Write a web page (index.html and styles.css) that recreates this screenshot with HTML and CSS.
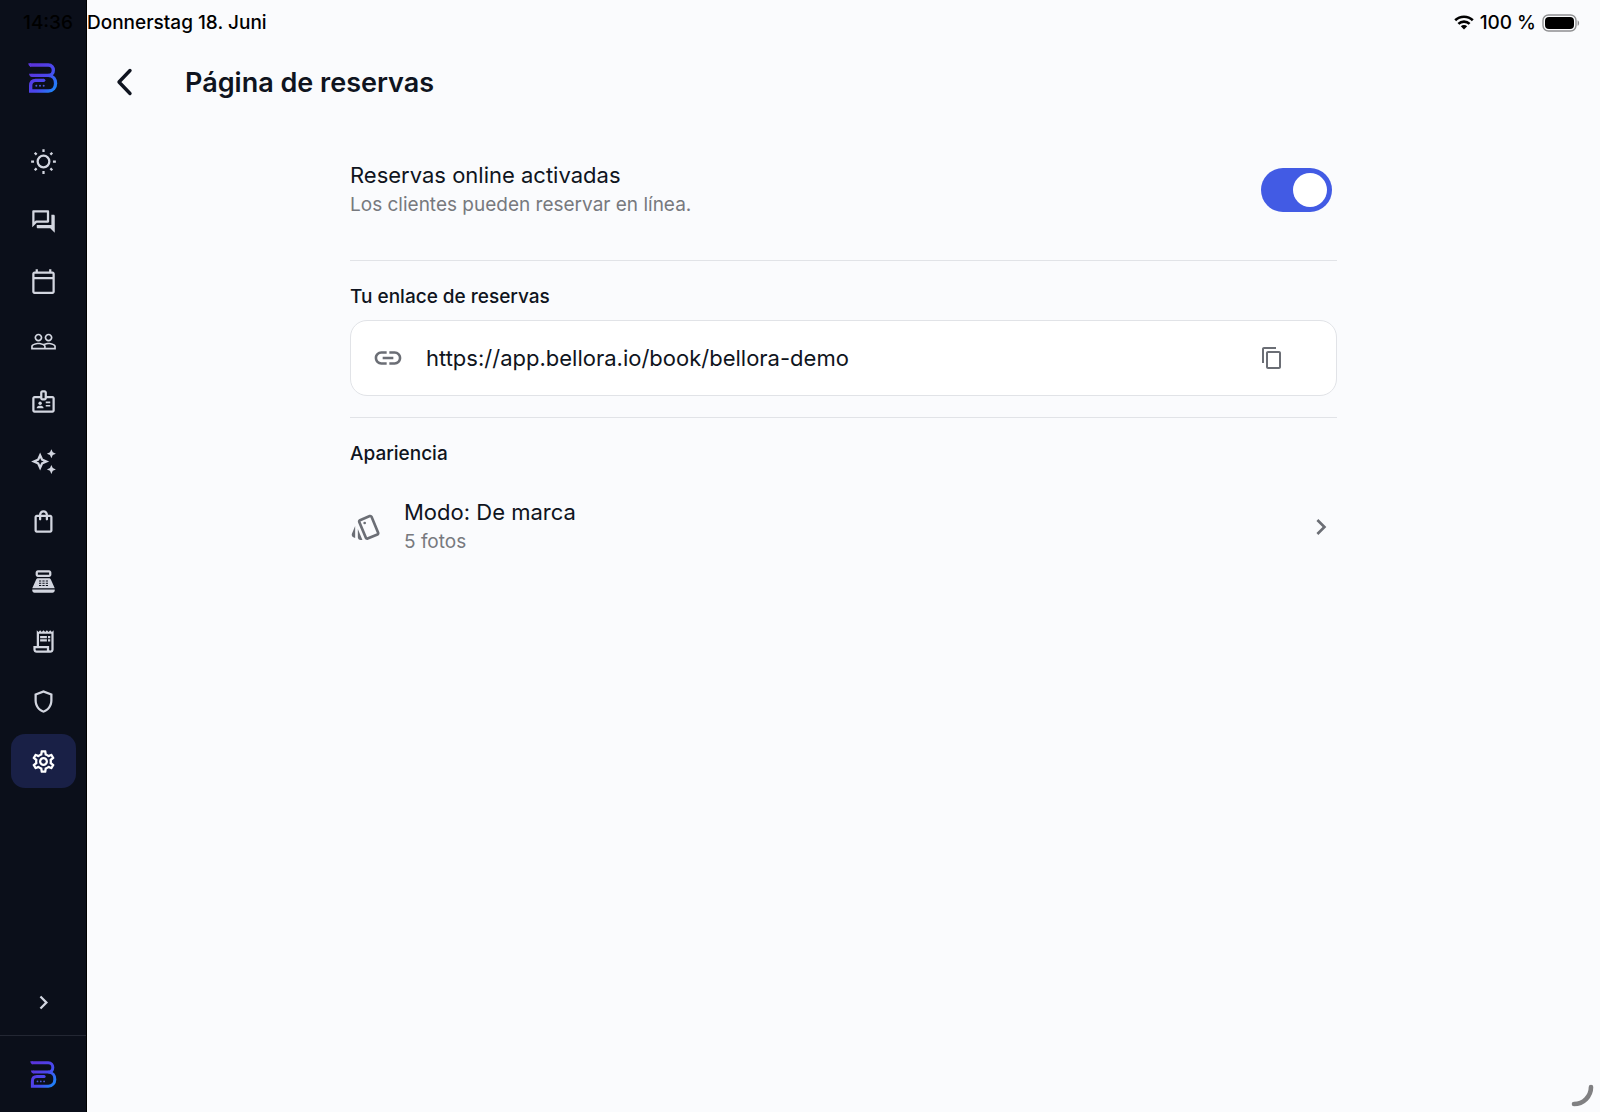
FILE: index.html
```html
<!DOCTYPE html>
<html lang="es">
<head>
    <meta charset="UTF-8">
    <meta name="viewport" content="width=device-width, initial-scale=1.0">
    <title>Página de reservas</title>
    <link rel="stylesheet" href="styles.css">
</head>
<body>
    <svg class="defs" width="0" height="0" aria-hidden="true">
        <defs>
            <linearGradient id="brand" gradientUnits="userSpaceOnUse" x1="10" y1="20" x2="90" y2="80">
                <stop offset="0" stop-color="#5a35dc"/>
                <stop offset="0.5" stop-color="#4a48ee"/>
                <stop offset="1" stop-color="#1590fa"/>
            </linearGradient>
            <symbol id="logo" viewBox="0 0 88 90">
                <g fill="none" stroke="url(#brand)" stroke-width="10">
                    <path d="M5 6H60C80 6 80 37 60 37H10"/>
                    <path d="M60 37C90 39 88 84 60 84H7V68C7 56 13 52 22 52H46" />
                </g>
                <path d="M0 1H8V11H7C3 10 0 6 0 1zM2 32H12V42C6 42 3 38 2 32z" fill="url(#brand)"/>
                <circle cx="46" cy="52" r="5" fill="url(#brand)"/>
                <g fill="#4a58d8">
                    <circle cx="24" cy="68" r="3"/>
                    <circle cx="35" cy="68" r="3"/>
                    <circle cx="46" cy="68" r="3"/>
                </g>
            </symbol>
        </defs>
    </svg>

    <div class="app">
        <aside class="sidebar">
            <div class="time">14:36</div>
            <a class="brand" href="#" aria-label="Bellora"><svg class="logo"><use href="#logo"/></svg></a>
            <nav class="nav">
                <a href="#" aria-label="Hoy">
                    <svg viewBox="0 0 24 24"><g fill="none" stroke="currentColor" stroke-width="2"><circle cx="12" cy="12" r="5.2"/><path d="M12 1v2.6M12 20.4V23M1 12h2.6M20.4 12H23M4.2 4.2l1.7 1.7M18.1 18.1l1.7 1.7M4.2 19.8l1.7-1.7M18.1 5.9l1.7-1.7"/></g></svg>
                </a>
                <a href="#" aria-label="Mensajes">
                    <svg viewBox="0 0 24 24"><path d="M15 4v7H5.17L4 12.17V4h11m1-2H3c-.55 0-1 .45-1 1v14l4-4h10c.55 0 1-.45 1-1V3c0-.55-.45-1-1-1zm5 4h-2v9H6v2c0 .55.45 1 1 1h11l4 4V7c0-.55-.45-1-1-1z"/></svg>
                </a>
                <a href="#" aria-label="Calendario">
                    <svg viewBox="0 0 24 24"><path d="M20 3h-1V1h-2v2H7V1H5v2H4c-1.1 0-2 .9-2 2v16c0 1.1.9 2 2 2h16c1.1 0 2-.9 2-2V5c0-1.1-.9-2-2-2zm0 18H4V10h16v11zm0-13H4V5h16v3z"/></svg>
                </a>
                <a href="#" aria-label="Clientes">
                    <svg viewBox="0 0 24 24"><path d="M16.5 13c-1.2 0-3.07.34-4.5 1-1.43-.67-3.3-1-4.5-1C5.33 13 1 14.08 1 16.25V19h22v-2.75c0-2.17-4.33-3.25-6.5-3.25zm-4 4.5h-10v-1.25c0-.54 2.56-1.75 5-1.75s5 1.21 5 1.75v1.25zm9 0H14v-1.25c0-.46-.2-.86-.52-1.22.88-.3 1.96-.53 3.02-.53 2.44 0 5 1.21 5 1.75v1.25zM7.5 12c1.93 0 3.5-1.57 3.5-3.5S9.43 5 7.5 5 4 6.57 4 8.5 5.57 12 7.5 12zm0-5.5c1.1 0 2 .9 2 2s-.9 2-2 2-2-.9-2-2 .9-2 2-2zm9 5.5c1.93 0 3.5-1.57 3.5-3.5S18.43 5 16.5 5 13 6.57 13 8.5s1.57 3.5 3.5 3.5zm0-5.5c1.1 0 2 .9 2 2s-.9 2-2 2-2-.9-2-2 .9-2 2-2z"/></svg>
                </a>
                <a href="#" aria-label="Equipo">
                    <svg viewBox="0 0 24 24"><path d="M20 7h-5V4c0-1.1-.9-2-2-2h-2c-1.1 0-2 .9-2 2v3H4c-1.1 0-2 .9-2 2v11c0 1.1.9 2 2 2h16c1.1 0 2-.9 2-2V9c0-1.1-.9-2-2-2zM11 4h2v5h-2V4zm9 16H4V9h5c0 1.1.9 2 2 2h2c1.1 0 2-.9 2-2h5v11z"/><circle cx="9" cy="13.5" r="1.5"/><path d="M11.08 16.18C10.44 15.9 9.74 15.75 9 15.75s-1.44.15-2.08.43C6.36 16.42 6 16.96 6 17.57V18h6v-.43c0-.61-.36-1.15-.92-1.39zM14 12h4v1.5h-4zM14 15h4v1.5h-4z"/></svg>
                </a>
                <a href="#" aria-label="Servicios">
                    <svg viewBox="0 0 24 24"><path d="M19 9l1.25-2.75L23 5l-2.75-1.25L19 1l-1.25 2.75L15 5l2.75 1.25L19 9zm0 6l-1.25 2.75L15 19l2.75 1.25L19 23l1.25-2.75L23 19l-2.75-1.25L19 15zM11.5 9.5L9 4 6.5 9.5 1 12l5.5 2.5L9 20l2.5-5.5L17 12l-5.5-2.5zm-1.51 3.49L9 15.17l-.99-2.18L5.83 12l2.18-.99L9 8.83l.99 2.18 2.18.99-2.18.99z"/></svg>
                </a>
                <a href="#" aria-label="Productos">
                    <svg viewBox="0 0 24 24"><path d="M18 6h-2c0-2.21-1.79-4-4-4S8 3.79 8 6H6c-1.1 0-2 .9-2 2v12c0 1.1.9 2 2 2h12c1.1 0 2-.9 2-2V8c0-1.1-.9-2-2-2zm-6-2c1.1 0 2 .9 2 2h-4c0-1.1.9-2 2-2zm6 16H6V8h2v2c0 .55.45 1 1 1s1-.45 1-1V8h4v2c0 .55.45 1 1 1s1-.45 1-1V8h2v12z"/></svg>
                </a>
                <a href="#" aria-label="Caja">
                    <svg viewBox="0 0 24 24"><path fill-rule="evenodd" d="M17 2H7c-1.1 0-2 .9-2 2v2c0 1.1.9 2 2 2h10c1.1 0 2-.9 2-2V4c0-1.1-.9-2-2-2zm0 4H7V4h10v2zM20 22H4c-1.1 0-2-.9-2-2v-1h20v1c0 1.1-.9 2-2 2zM18.53 10.19C18.21 9.47 17.49 9 16.7 9H7.3c-.79 0-1.51.47-1.83 1.19L2 18h20l-3.47-7.81zM8 11h2v1H8zM11 11h2v1h-2zM14 11h2v1h-2zM8 13h2v1H8zM11 13h2v1h-2zM14 13h2v1h-2zM8 15h2v1H8zM11 15h2v1h-2zM14 15h2v1h-2z"/></svg>
                </a>
                <a href="#" aria-label="Facturas">
                    <svg viewBox="0 0 24 24"><path d="M19.5 3.5L18 2l-1.5 1.5L15 2l-1.5 1.5L12 2l-1.5 1.5L9 2 7.5 3.5 6 2v14H3v3c0 1.66 1.34 3 3 3h12c1.66 0 3-1.34 3-3V2l-1.5 1.5zM15 20H6c-.55 0-1-.45-1-1v-1h10v2zm4-1c0 .55-.45 1-1 1s-1-.45-1-1v-3H8V5h11v14zM9 7h6v2H9zM16 7h2v2h-2zM9 10h6v2H9zM16 10h2v2h-2z"/></svg>
                </a>
                <a href="#" aria-label="Seguridad">
                    <svg viewBox="0 0 24 24"><path d="M12 2L4 5v6.09c0 5.05 3.41 9.76 8 10.91 4.59-1.15 8-5.86 8-10.91V5l-8-3zm6 9.09c0 4-2.55 7.7-6 8.83-3.45-1.13-6-4.82-6-8.83v-4.7l6-2.25 6 2.25v4.7z"/></svg>
                </a>
                <a href="#" class="active" aria-label="Ajustes" aria-current="page">
                    <svg viewBox="0 0 24 24"><path d="M19.43 12.98c.04-.32.07-.64.07-.98 0-.34-.03-.66-.07-.98l2.11-1.65c.19-.15.24-.42.12-.64l-2-3.46c-.09-.16-.26-.25-.44-.25-.06 0-.12.01-.17.03l-2.49 1c-.52-.4-1.08-.73-1.69-.98l-.38-2.65C14.46 2.18 14.25 2 14 2h-4c-.25 0-.46.18-.49.42l-.38 2.65c-.61.25-1.17.59-1.69.98l-2.49-1c-.06-.02-.12-.03-.18-.03-.17 0-.34.09-.43.25l-2 3.46c-.13.22-.07.49.12.64l2.11 1.65c-.04.32-.07.65-.07.98 0 .33.03.66.07.98l-2.11 1.65c-.19.15-.24.42-.12.64l2 3.46c.09.16.26.25.44.25.06 0 .12-.01.17-.03l2.49-1c.52.4 1.08.73 1.69.98l.38 2.65c.03.24.24.42.49.42h4c.25 0 .46-.18.49-.42l.38-2.65c.61-.25 1.17-.59 1.69-.98l2.49 1c.06.02.12.03.18.03.17 0 .34-.09.43-.25l2-3.46c.12-.22.07-.49-.12-.64l-2.11-1.65zm-1.98-1.71c.04.31.05.52.05.73 0 .21-.02.43-.05.73l-.14 1.13.89.7 1.08.84-.7 1.21-1.27-.51-1.04-.42-.9.68c-.43.32-.84.56-1.25.73l-1.06.43-.16 1.13-.2 1.35h-1.4l-.19-1.35-.16-1.13-1.06-.43c-.43-.18-.83-.41-1.23-.71l-.91-.7-1.06.43-1.27.51-.7-1.21 1.08-.84.89-.7-.14-1.13c-.03-.31-.05-.54-.05-.74s.02-.43.05-.73l.14-1.13-.89-.7-1.08-.84.7-1.21 1.27.51 1.04.42.9-.68c.43-.32.84-.56 1.25-.73l1.06-.43.16-1.13.2-1.35h1.39l.19 1.35.16 1.13 1.06.43c.43.18.83.41 1.23.71l.91.7 1.06-.43 1.27-.51.7 1.21-1.07.85-.89.7.14 1.13zM12 8c-2.21 0-4 1.79-4 4s1.79 4 4 4 4-1.79 4-4-1.79-4-4-4zm0 6c-1.1 0-2-.9-2-2s.9-2 2-2 2 .9 2 2-.9 2-2 2z"/></svg>
                </a>
            </nav>
            <button type="button" class="expand" aria-label="Expandir menú">
                <svg viewBox="0 0 24 24"><path d="M10 6L8.59 7.41 13.17 12l-4.58 4.59L10 18l6-6z"/></svg>
            </button>
            <a class="account" href="#" aria-label="Cuenta"><svg class="logo small"><use href="#logo"/></svg></a>
        </aside>

        <main class="main">
            <div class="status">
                <span>Donnerstag 18. Juni</span>
                <div class="status-right">
                    <svg class="wifi" viewBox="0 0 20 15" aria-hidden="true">
                        <g fill="none" stroke="#000" stroke-width="2.6"><path d="M1.2 5.3a12.6 12.6 0 0 1 17.6 0"/><path d="M4.4 8.9a8 8 0 0 1 11.2 0"/></g>
                        <path d="M10 14.6l-3.2-3.3a4.6 4.6 0 0 1 6.4 0z"/>
                    </svg>
                    <span>100 %</span>
                    <svg class="battery" viewBox="0 0 38 18" aria-hidden="true">
                        <rect x="1" y="1" width="33" height="16" rx="5.5" fill="none" stroke="#8e8f91" stroke-width="1.4"/>
                        <rect x="3" y="3" width="29" height="12" rx="4"/>
                        <path d="M35.6 6.2c2 .9 2 4.7 0 5.6z" fill="#8e8f91"/>
                    </svg>
                </div>
            </div>

            <header class="header">
                <button type="button" class="back" aria-label="Atrás">
                    <svg viewBox="0 0 18 28"><path d="M15 2.5L4 14l11 11.5" fill="none" stroke="currentColor" stroke-width="3.4" stroke-linecap="round" stroke-linejoin="round"/></svg>
                </button>
                <h1>Página de reservas</h1>
            </header>

            <div class="content">
                <div class="row">
                    <label class="row-text" for="online">
                        <span class="row-title">Reservas online activadas</span>
                        <span class="row-sub">Los clientes pueden reservar en línea.</span>
                    </label>
                    <input type="checkbox" role="switch" id="online" class="switch" checked>
                </div>

                <section>
                    <h2><label for="link">Tu enlace de reservas</label></h2>
                    <div class="link-box">
                        <svg class="icon-lg" viewBox="0 0 24 24"><path d="M3.9 12c0-1.71 1.39-3.1 3.1-3.1h4V7H7c-2.76 0-5 2.24-5 5s2.24 5 5 5h4v-1.9H7c-1.71 0-3.1-1.39-3.1-3.1zM8 13h8v-2H8v2zm9-6h-4v1.9h4c1.71 0 3.1 1.39 3.1 3.1s-1.39 3.1-3.1 3.1h-4V17h4c2.76 0 5-2.24 5-5s-2.24-5-5-5z"/></svg>
                        <input type="text" id="link" value="https://app.bellora.io/book/bellora-demo" readonly>
                        <button type="button" class="copy" aria-label="Copiar enlace">
                            <svg viewBox="0 0 24 24"><path d="M16 1H4c-1.1 0-2 .9-2 2v14h2V3h12V1zm3 4H8c-1.1 0-2 .9-2 2v14c0 1.1.9 2 2 2h11c1.1 0 2-.9 2-2V7c0-1.1-.9-2-2-2zm0 16H8V7h11v14z"/></svg>
                        </button>
                    </div>
                </section>

                <section>
                    <h2>Apariencia</h2>
                    <a class="mode" href="#">
                        <svg class="icon-lg" viewBox="0 0 24 24"><path d="M2.53 19.65l1.34.56v-9.03l-2.43 5.86c-.41 1.02.08 2.19 1.09 2.61zm19.5-3.7L17.07 3.98c-.31-.75-1.04-1.21-1.81-1.23-.26 0-.53.04-.79.15L7.1 5.95c-.75.31-1.21 1.03-1.23 1.8-.01.27.04.54.15.8l4.96 11.97c.31.76 1.05 1.22 1.83 1.23.26 0 .52-.05.77-.15l7.36-3.05c1.02-.42 1.51-1.59 1.09-2.6zm-9.2 3.8L7.87 7.79l7.35-3.04h.01l4.95 11.95-7.35 3.05zM5.88 19.75c0 1.1.9 2 2 2h1.45l-3.45-8.34v6.34z"/><circle cx="11" cy="9" r="1"/></svg>
                        <span class="row-text">
                            <span class="row-title">Modo: De marca</span>
                            <span class="row-sub">5 fotos</span>
                        </span>
                        <svg class="icon-lg" viewBox="0 0 24 24"><path d="M10 6L8.59 7.41 13.17 12l-4.58 4.59L10 18l6-6z"/></svg>
                    </a>
                </section>
            </div>
        </main>
    </div>

    <svg class="corner" viewBox="0 0 26 26" aria-hidden="true"><path d="M3 21A17 17 0 0 0 20 4" fill="none" stroke="#808082" stroke-width="4.6" stroke-linecap="round"/></svg>
</body>
</html>
```
FILE: styles.css
```css
* {
    box-sizing: border-box;
}
body {
    margin: 0;
    font-family: Inter, "Liberation Sans", sans-serif;
    color: #0f1420;
    background-color: #fafbfd;
}
a {
    color: inherit;
    text-decoration: none;
}
button {
    padding: 0;
    border: none;
    background: none;
    color: inherit;
    cursor: pointer;
}
svg {
    display: block;
    fill: currentColor;
}
.defs {
    position: absolute;
}
.app {
    display: flex;
    min-height: 100vh;
}

/* Sidebar */
.sidebar {
    width: 87px;
    flex-shrink: 0;
    display: flex;
    flex-direction: column;
    align-items: center;
    background-color: #0b0f1a;
    border-right: 1px solid #000;
    color: #d3d6e0;
}
.time {
    align-self: flex-end;
    padding-right: 13px;
    line-height: 45px;
    font-size: 19px;
    font-weight: 500;
    color: #000;
}
.brand {
    padding: 18px 0 41px;
}
.logo {
    width: 30px;
    height: 30px;
}
.logo.small {
    width: 27px;
    height: 27px;
}
.nav {
    display: flex;
    flex-direction: column;
    gap: 6px;
}
.nav a {
    width: 65px;
    height: 54px;
    display: flex;
    align-items: center;
    justify-content: center;
    border-radius: 14px;
}
.nav a.active {
    background-color: #192046;
    color: #fff;
}
.nav svg,
.expand svg {
    width: 27px;
    height: 27px;
}
.expand {
    margin-top: auto;
    padding: 19px;
}
.account {
    width: 100%;
    height: 77px;
    display: flex;
    align-items: center;
    justify-content: center;
    border-top: 1px solid #232733;
}

/* Status bar and header */
.main {
    flex: 1;
}
.status {
    display: flex;
    justify-content: space-between;
    padding-right: 20px;
    line-height: 45px;
    font-size: 19px;
    font-weight: 500;
    color: #000;
}
.status-right {
    display: flex;
    align-items: center;
    gap: 6px;
}
.wifi {
    width: 20px;
    height: 15px;
}
.battery {
    width: 38px;
    height: 18px;
}
.header {
    display: flex;
    align-items: center;
    gap: 52px;
    height: 74px;
    padding-left: 28px;
}
.back svg {
    width: 18px;
    height: 28px;
}
h1 {
    margin: 0;
    font-size: 27px;
    font-weight: 600;
}

/* Settings */
.content {
    max-width: 1035px;
    margin: 0 auto;
    padding: 34px 24px;
}
.row {
    display: flex;
    align-items: center;
    justify-content: space-between;
    padding: 7px 5px 40px 0;
}
.row-text {
    display: flex;
    flex-direction: column;
    flex: 1;
}
.row-title {
    font-size: 22px;
    line-height: 30px;
}
.row-sub {
    font-size: 19px;
    line-height: 30px;
    color: #77797e;
}
.switch {
    appearance: none;
    width: 71px;
    height: 44px;
    margin: 0;
    padding: 5px;
    display: flex;
    border-radius: 22px;
    background-color: #b9bdc9;
    cursor: pointer;
}
.switch::before {
    content: "";
    width: 34px;
    height: 34px;
    border-radius: 50%;
    background-color: #fff;
}
.switch:checked {
    justify-content: flex-end;
    background-color: #425be4;
}
section {
    padding: 23px 0 21px;
    border-top: 1px solid #e1e3e7;
}
h2 {
    margin: 0 0 10px;
    font-size: 19px;
    line-height: 26px;
    font-weight: 500;
}
.link-box {
    display: flex;
    align-items: center;
    gap: 22px;
    height: 76px;
    padding: 0 52px 0 21px;
    border: 1px solid #e1e3e7;
    border-radius: 17px;
    background-color: #fff;
}
.link-box input {
    flex: 1;
    min-width: 0;
    padding: 0;
    border: none;
    outline: none;
    background: none;
    font: inherit;
    font-size: 22px;
    color: inherit;
}
.icon-lg {
    width: 32px;
    height: 32px;
    color: #6b6e75;
}
.copy svg {
    width: 24px;
    height: 24px;
    color: #6b6e75;
}
.mode {
    display: flex;
    align-items: center;
    gap: 22px;
    padding-top: 20px;
}

/* Resize handle in the window corner */
.corner {
    position: fixed;
    right: 3px;
    bottom: 3px;
    width: 26px;
    height: 26px;
}
```
